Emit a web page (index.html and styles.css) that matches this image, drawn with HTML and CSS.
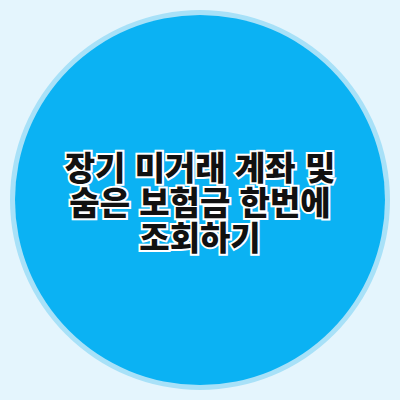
FILE: index.html
```html
<!DOCTYPE html>
<html lang="ko">
<head>
  <meta charset="UTF-8">
  <title>장기 미거래 계좌 및 숨은 보험금 한번에 조회하기</title>
  <link rel="stylesheet" href="styles.css">
</head>
<body>
  <div class="stage">
    <div class="badge">
      <h1 class="title">
        <span class="line">장기 미거래 계좌 및</span>
        <span class="line">숨은 보험금 한번에</span>
        <span class="line">조회하기</span>
      </h1>
    </div>
  </div>
</body>
</html>
```

FILE: styles.css
```css
:root {
  --bg: #e4f5fd;
  --ring: #a8e1f8;
  --disc: #0bb2f3;
  --ink: #111111;
}

html, body {
  margin: 0;
  padding: 0;
  background: var(--bg);
}

.stage {
  width: 400px;
  height: 400px;
  display: flex;
  align-items: center;
  justify-content: center;
}

.badge {
  width: 370px;
  height: 370px;
  border-radius: 50%;
  background: var(--disc);
  box-shadow: 0 0 0 5px var(--ring);
  display: flex;
  align-items: center;
  justify-content: center;
}

.title {
  margin: 2px 0 0;
  display: flex;
  flex-direction: column;
  align-items: center;
  font-family: "Noto Sans CJK KR", "Noto Sans", sans-serif;
  font-weight: 900;
  font-size: 33px;
  line-height: 35px;
  color: var(--ink);
  -webkit-text-stroke: 4px #ffffff;
  paint-order: stroke fill;
}

.line {
  display: block;
  height: 35px;
  white-space: nowrap;
}
```
